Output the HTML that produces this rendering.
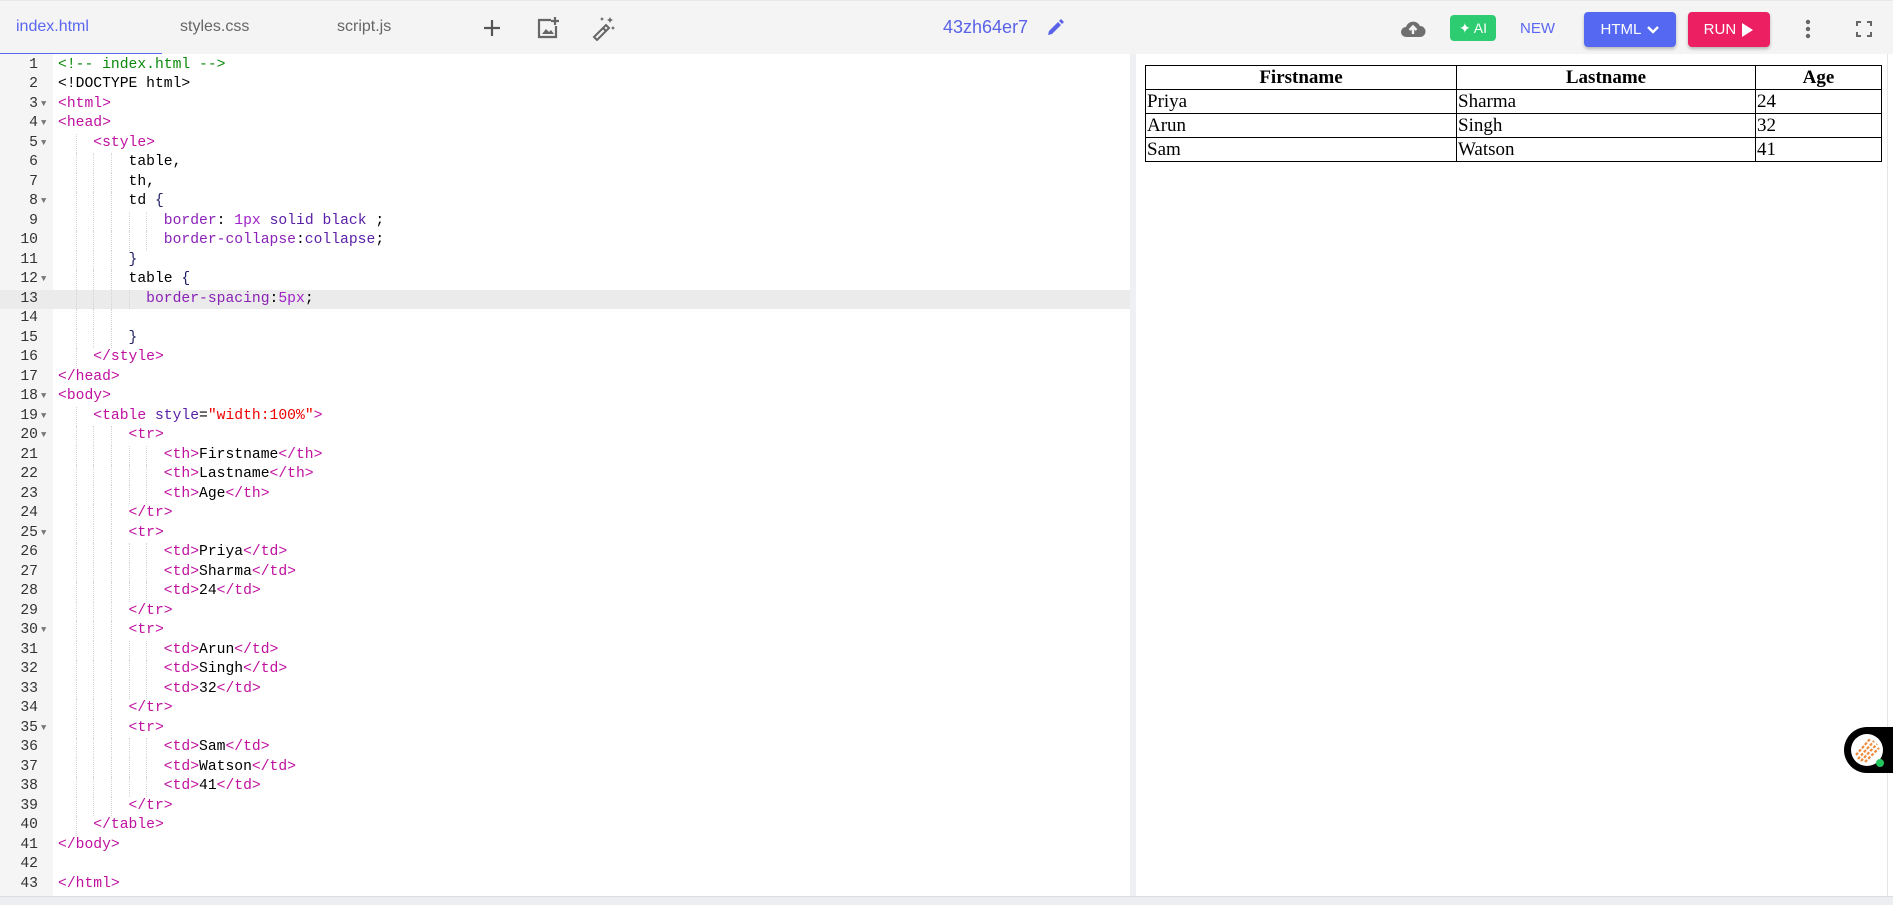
<!DOCTYPE html>
<html><head><meta charset="utf-8"><style>
*{box-sizing:border-box;margin:0;padding:0}
body{width:1893px;height:905px;overflow:hidden;background:#fff;font-family:"Liberation Sans",sans-serif;position:relative}
#hdr{position:absolute;left:0;top:0;width:1893px;height:54px;background:#f4f4f4;border-top:1px solid #e8e8e8}
.tab{position:absolute;top:17px;font-size:16px;color:#666}
#ul{position:absolute;left:0;top:52px;width:162px;height:3px;background:#5a67f0}
#ed{position:absolute;left:0;top:54px;width:1130px;height:842px;background:#fff}
#gut{position:absolute;left:0;top:0;width:53px;height:842px;background:#f5f5f5}
#code{position:absolute;left:0;top:1.5px;width:1130px;font-family:"Liberation Mono",monospace;font-size:14.7px}
.l{position:relative;height:19.5px;line-height:19.5px;white-space:pre;color:#000}
.l.a{background:#ebebeb}
.n{position:absolute;left:0;width:38px;text-align:right;color:#333}
.f{position:absolute;left:41px;top:0;font-size:9px;color:#777}
.c{position:absolute;left:58px}
i{display:inline-block;width:2ch;height:19.5px;vertical-align:top;border-left:1px dotted #d4d4d4}
i:first-child{border-left-color:transparent}
.t{color:#c0109f}.cm{color:#0a8a0a}.p{color:#8a22b8}.v{color:#a020c8}.k{color:#5a20a8}.s{color:#e00}.b{color:#222266}
#div{position:absolute;left:1130px;top:54px;width:6px;height:842px;background:#eef0f3}
#pv{position:absolute;left:1136px;top:54px;width:752px;height:842px;background:#fff;border-right:1px solid #e5e5e5}
table{position:absolute;left:9px;top:11px;width:737px;border-collapse:collapse;font-family:"Liberation Serif",serif;font-size:19px}
th,td{border:1.2px solid #000;height:24px;padding:0 1px;line-height:22px}
td{text-align:left}
#bot{position:absolute;left:0;top:896px;width:1893px;height:9px;background:#eceef1;border-top:1px solid #dcdde0}
.btn{position:absolute;border-radius:4px;color:#fff;font-size:15px;display:flex;align-items:center;justify-content:center;box-shadow:0 2px 3px rgba(0,0,0,.25)}
</style></head><body>
<div id="hdr">
<span class="tab" style="left:16px;color:#5a67f0">index.html</span>
<span class="tab" style="left:180px">styles.css</span>
<span class="tab" style="left:337px">script.js</span>
<svg style="position:absolute;left:482px;top:17px" width="20" height="20" viewBox="0 0 20 20"><path d="M10 2v16M2 10h16" stroke="#555" stroke-width="2.2"/></svg>
<svg style="position:absolute;left:535px;top:14px" width="26" height="26" viewBox="0 0 26 26"><path d="M16 5H4v17h17V11" fill="none" stroke="#666" stroke-width="2.2"/><path d="M20 2v8M16 6h8" stroke="#666" stroke-width="2.2"/><path d="M7 19l4-5 3 3 2-2 3 4z" fill="#666"/></svg>
<svg style="position:absolute;left:590px;top:14px" width="26" height="26" viewBox="0 0 26 26"><path d="M4 22l12-12 3 3-12 12z" fill="none" stroke="#666" stroke-width="2"/><path d="M13 13l3 3" stroke="#666" stroke-width="2"/><path d="M20 2l1 2 2 1-2 1-1 2-1-2-2-1 2-1zM23 11l.7 1.3 1.3.7-1.3.7-.7 1.3-.7-1.3-1.3-.7 1.3-.7zM12 2l.7 1.3 1.3.7-1.3.7L12 6l-.7-1.3L10 4l1.3-.7z" fill="#666"/></svg>
<span style="position:absolute;left:943px;top:16px;font-size:18px;color:#5a62e8">43zh64er7</span>
<svg style="position:absolute;left:1045px;top:17px" width="20" height="20" viewBox="0 0 20 20"><path d="M3 17l1-4 9-9 3 3-9 9z M14 3l2-2 3 3-2 2z" fill="#5a62e8"/></svg>
<svg style="position:absolute;left:1400px;top:16px" width="26" height="22" viewBox="0 0 26 22"><path d="M6 20a5 5 0 0 1 0-10 7.5 7.5 0 0 1 14-1 5.5 5.5 0 0 1 0 11z" fill="#6f6f6f"/><path d="M13 17v-7M9.5 13l3.5-3.5 3.5 3.5" stroke="#f4f4f4" stroke-width="2.4" fill="none"/></svg>
<div class="btn" style="left:1450px;top:14px;width:46px;height:26px;background:#2ecc71;box-shadow:none;font-size:14px">✦ AI</div>
<span style="position:absolute;left:1520px;top:19px;font-size:15px;color:#5a67f0">NEW</span>
<div class="btn" style="left:1584px;top:11px;width:92px;height:35px;background:#5468f2">HTML&nbsp;<svg width="14" height="10" viewBox="0 0 14 10"><path d="M2 2l5 5 5-5" stroke="#fff" stroke-width="2.4" fill="none"/></svg></div>
<div class="btn" style="left:1688px;top:11px;width:82px;height:35px;background:#ec1f63">RUN&nbsp;<svg width="14" height="16" viewBox="0 0 14 16"><path d="M2 1l11 7-11 7z" fill="#fff"/></svg></div>
<svg style="position:absolute;left:1803px;top:18px" width="10" height="22" viewBox="0 0 10 22"><circle cx="5" cy="3" r="2.2" fill="#666"/><circle cx="5" cy="10" r="2.2" fill="#666"/><circle cx="5" cy="17" r="2.2" fill="#666"/></svg>
<svg style="position:absolute;left:1856px;top:20px" width="16" height="16" viewBox="0 0 16 16"><path d="M1 5V1h4M11 1h4v4M15 11v4h-4M5 15H1v-4" stroke="#666" stroke-width="2" fill="none"/></svg>
<div id="ul"></div>
</div>
<div id="ed"><div id="gut"></div>
<div id="code">
<div class="l"><span class="n">1</span><span class="c"><span class="cm">&lt;!-- index.html --&gt;</span></span></div>
<div class="l"><span class="n">2</span><span class="c">&lt;!DOCTYPE html&gt;</span></div>
<div class="l"><span class="n">3</span><span class="f">▼</span><span class="c"><span class="t">&lt;html&gt;</span></span></div>
<div class="l"><span class="n">4</span><span class="f">▼</span><span class="c"><span class="t">&lt;head&gt;</span></span></div>
<div class="l"><span class="n">5</span><span class="f">▼</span><span class="c"><i></i><i></i><span class="t">&lt;style&gt;</span></span></div>
<div class="l"><span class="n">6</span><span class="c"><i></i><i></i><i></i><i></i>table,</span></div>
<div class="l"><span class="n">7</span><span class="c"><i></i><i></i><i></i><i></i>th,</span></div>
<div class="l"><span class="n">8</span><span class="f">▼</span><span class="c"><i></i><i></i><i></i><i></i>td <span class="b">{</span></span></div>
<div class="l"><span class="n">9</span><span class="c"><i></i><i></i><i></i><i></i><i></i><i></i><span class="p">border</span>: <span class="v">1px</span> <span class="k">solid black</span> ;</span></div>
<div class="l"><span class="n">10</span><span class="c"><i></i><i></i><i></i><i></i><i></i><i></i><span class="p">border-collapse</span>:<span class="k">collapse</span>;</span></div>
<div class="l"><span class="n">11</span><span class="c"><i></i><i></i><i></i><i></i><span class="b">}</span></span></div>
<div class="l"><span class="n">12</span><span class="f">▼</span><span class="c"><i></i><i></i><i></i><i></i>table <span class="b">{</span></span></div>
<div class="l a"><span class="n">13</span><span class="c"><i></i><i></i><i></i><i></i><i></i><span class="p">border-spacing</span>:<span class="v">5px</span>;</span></div>
<div class="l"><span class="n">14</span><span class="c"><i></i><i></i><i></i><i></i></span></div>
<div class="l"><span class="n">15</span><span class="c"><i></i><i></i><i></i><i></i><span class="b">}</span></span></div>
<div class="l"><span class="n">16</span><span class="c"><i></i><i></i><span class="t">&lt;/style&gt;</span></span></div>
<div class="l"><span class="n">17</span><span class="c"><span class="t">&lt;/head&gt;</span></span></div>
<div class="l"><span class="n">18</span><span class="f">▼</span><span class="c"><span class="t">&lt;body&gt;</span></span></div>
<div class="l"><span class="n">19</span><span class="f">▼</span><span class="c"><i></i><i></i><span class="t">&lt;table </span><span class="k">style</span>=<span class="s">"width:100%"</span><span class="t">&gt;</span></span></div>
<div class="l"><span class="n">20</span><span class="f">▼</span><span class="c"><i></i><i></i><i></i><i></i><span class="t">&lt;tr&gt;</span></span></div>
<div class="l"><span class="n">21</span><span class="c"><i></i><i></i><i></i><i></i><i></i><i></i><span class="t">&lt;th&gt;</span>Firstname<span class="t">&lt;/th&gt;</span></span></div>
<div class="l"><span class="n">22</span><span class="c"><i></i><i></i><i></i><i></i><i></i><i></i><span class="t">&lt;th&gt;</span>Lastname<span class="t">&lt;/th&gt;</span></span></div>
<div class="l"><span class="n">23</span><span class="c"><i></i><i></i><i></i><i></i><i></i><i></i><span class="t">&lt;th&gt;</span>Age<span class="t">&lt;/th&gt;</span></span></div>
<div class="l"><span class="n">24</span><span class="c"><i></i><i></i><i></i><i></i><span class="t">&lt;/tr&gt;</span></span></div>
<div class="l"><span class="n">25</span><span class="f">▼</span><span class="c"><i></i><i></i><i></i><i></i><span class="t">&lt;tr&gt;</span></span></div>
<div class="l"><span class="n">26</span><span class="c"><i></i><i></i><i></i><i></i><i></i><i></i><span class="t">&lt;td&gt;</span>Priya<span class="t">&lt;/td&gt;</span></span></div>
<div class="l"><span class="n">27</span><span class="c"><i></i><i></i><i></i><i></i><i></i><i></i><span class="t">&lt;td&gt;</span>Sharma<span class="t">&lt;/td&gt;</span></span></div>
<div class="l"><span class="n">28</span><span class="c"><i></i><i></i><i></i><i></i><i></i><i></i><span class="t">&lt;td&gt;</span>24<span class="t">&lt;/td&gt;</span></span></div>
<div class="l"><span class="n">29</span><span class="c"><i></i><i></i><i></i><i></i><span class="t">&lt;/tr&gt;</span></span></div>
<div class="l"><span class="n">30</span><span class="f">▼</span><span class="c"><i></i><i></i><i></i><i></i><span class="t">&lt;tr&gt;</span></span></div>
<div class="l"><span class="n">31</span><span class="c"><i></i><i></i><i></i><i></i><i></i><i></i><span class="t">&lt;td&gt;</span>Arun<span class="t">&lt;/td&gt;</span></span></div>
<div class="l"><span class="n">32</span><span class="c"><i></i><i></i><i></i><i></i><i></i><i></i><span class="t">&lt;td&gt;</span>Singh<span class="t">&lt;/td&gt;</span></span></div>
<div class="l"><span class="n">33</span><span class="c"><i></i><i></i><i></i><i></i><i></i><i></i><span class="t">&lt;td&gt;</span>32<span class="t">&lt;/td&gt;</span></span></div>
<div class="l"><span class="n">34</span><span class="c"><i></i><i></i><i></i><i></i><span class="t">&lt;/tr&gt;</span></span></div>
<div class="l"><span class="n">35</span><span class="f">▼</span><span class="c"><i></i><i></i><i></i><i></i><span class="t">&lt;tr&gt;</span></span></div>
<div class="l"><span class="n">36</span><span class="c"><i></i><i></i><i></i><i></i><i></i><i></i><span class="t">&lt;td&gt;</span>Sam<span class="t">&lt;/td&gt;</span></span></div>
<div class="l"><span class="n">37</span><span class="c"><i></i><i></i><i></i><i></i><i></i><i></i><span class="t">&lt;td&gt;</span>Watson<span class="t">&lt;/td&gt;</span></span></div>
<div class="l"><span class="n">38</span><span class="c"><i></i><i></i><i></i><i></i><i></i><i></i><span class="t">&lt;td&gt;</span>41<span class="t">&lt;/td&gt;</span></span></div>
<div class="l"><span class="n">39</span><span class="c"><i></i><i></i><i></i><i></i><span class="t">&lt;/tr&gt;</span></span></div>
<div class="l"><span class="n">40</span><span class="c"><i></i><i></i><span class="t">&lt;/table&gt;</span></span></div>
<div class="l"><span class="n">41</span><span class="c"><span class="t">&lt;/body&gt;</span></span></div>
<div class="l"><span class="n">42</span><span class="c"></span></div>
<div class="l"><span class="n">43</span><span class="c"><span class="t">&lt;/html&gt;</span></span></div>
</div></div>
<div id="div"></div>
<div id="pv">
<table>
<tr><th style="width:311px">Firstname</th><th style="width:299px">Lastname</th><th>Age</th></tr>
<tr><td>Priya</td><td>Sharma</td><td>24</td></tr>
<tr><td>Arun</td><td>Singh</td><td>32</td></tr>
<tr><td>Sam</td><td>Watson</td><td>41</td></tr>
</table>
</div>
<div style="position:absolute;left:1844px;top:727px;width:49px;height:46px;background:#000;border-radius:23px 0 0 23px"></div>
<svg style="position:absolute;left:1850px;top:733px" width="36" height="36" viewBox="0 0 36 36"><circle cx="17" cy="17" r="16" fill="#fff"/><g stroke="#f08a3c" stroke-width="2.2" stroke-dasharray="3 1.5"><path d="M6 22L20 6M8 26L24 8M11 28L27 11M15 29L29 15"/></g><circle cx="30" cy="30" r="4" fill="#22c55e"/></svg>
<div id="bot"></div>
</body></html>
